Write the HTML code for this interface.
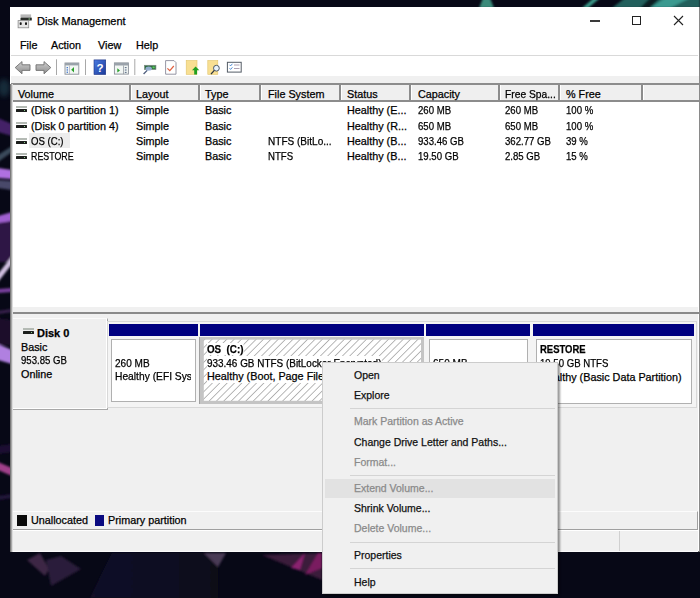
<!DOCTYPE html>
<html><head><meta charset="utf-8">
<style>
*{margin:0;padding:0;box-sizing:border-box}
html,body{width:700px;height:598px;overflow:hidden;background:#07081a}
body{position:relative;font-family:"Liberation Sans",sans-serif;font-size:10.8px;color:#000;-webkit-text-stroke:0.25px currentColor}
.cn{display:inline-block;transform:scaleX(0.89);transform-origin:0 0}
.a{position:absolute}
.t{position:absolute;white-space:nowrap;line-height:12px}
#bg{left:0;top:0}
#win{left:10px;top:7px;width:690px;height:545px;background:#fff;border-right:1px solid #8a8a8a;border-bottom:1px solid #6e6e6e}
.hl{position:absolute;height:1px}
.vl{position:absolute;width:1px}
.col{position:absolute;top:83px;height:19px;width:2px;background:#8c8c8c}
.col:after{content:"";position:absolute;left:2px;top:2px;width:1px;height:15px;background:#fff}
.ht{position:absolute;top:88px;white-space:nowrap;line-height:12px}
.row{position:absolute;white-space:nowrap;line-height:12px}
.drv{position:absolute;width:11px;height:3px;background:#1c1e1c;border-radius:0.5px}
.drv:before{content:"";position:absolute;left:0;top:-3px;width:11px;height:2px;background:#b4bab4}
.drv:after{content:"";position:absolute;right:2px;top:1px;width:1px;height:1px;background:#8fd08f}
.mi{position:absolute;left:354px;white-space:nowrap;line-height:12px;font-size:10.5px;color:#111}
.dis{color:#8a8a8a}
.sep{position:absolute;left:350px;width:205px;height:1px;background:#d4d4d4}
</style></head><body>
<svg id="bg" class="a" width="700" height="598" viewBox="0 0 700 598">
  <defs>
    <linearGradient id="gn" x1="0" y1="0" x2="1" y2="0"><stop offset="0" stop-color="#120e28"/><stop offset="0.6" stop-color="#0e0b22"/><stop offset="1" stop-color="#0a0a18"/></linearGradient>
    <filter id="bl" x="-20%" y="-20%" width="140%" height="140%"><feGaussianBlur stdDeviation="1.2"/></filter>
    <filter id="bl2" x="-20%" y="-20%" width="140%" height="140%"><feGaussianBlur stdDeviation="2.5"/></filter>
  </defs>
  <rect width="700" height="598" fill="#070816"/>
  <!-- top strip teal -->
  <g filter="url(#bl)">
  <path d="M483 -2 L490 -2 L494 8 L479 8Z" fill="#3a8a7a"/>
  <path d="M582 8 L594 -2 L600 -2 L588 8Z" fill="#3a9a8a"/>
  <path d="M612 8 L625 -2 L700 -2 L700 8Z" fill="#235e5c"/>
  <path d="M640 8 L650 -2 L660 -2 L650 8Z" fill="#0a1a20"/>
  <path d="M650 8 L665 -2 L690 -2 L670 8Z" fill="#3a9a90"/>
  </g>
  <!-- left purple stripes -->
  <ellipse cx="4" cy="88" rx="6" ry="9" fill="#1a3a4a" opacity="0.7" filter="url(#bl2)"/>
  <g filter="url(#bl)">
  <path d="M-2 118 L12 124 L12 136 L-2 132Z" fill="#4a2470" opacity="0.9"/>
  <path d="M-2 155 L12 146 L12 152 L-2 162Z" fill="#3a4a5a"/>
  <path d="M-2 168 L12 170 L12 179 L-2 178Z" fill="#b070e0"/>
  <path d="M-2 180 L12 181 L12 190 L-2 188Z" fill="#4a4a6a"/>
  <path d="M-2 216 L12 212 L12 221 L-2 225Z" fill="#a060d0"/>
  <path d="M-2 223 L12 221 L12 262 L-2 262Z" fill="#2e1545"/>
  <path d="M-2 274 L12 256 L12 264 L-2 282Z" fill="#d0c0e0"/>
  <path d="M-2 289 L12 288 L12 292 L-2 293Z" fill="#7a40a0"/>
  <path d="M-2 311 L12 309 L12 312 L-2 314Z" fill="#3a2050"/>
  <path d="M-2 318 L12 320 L12 346 L-2 344Z" fill="#1a0c2a"/>
  <path d="M-2 344 L12 350 L12 364 L-2 360Z" fill="#b080e0"/>
  <path d="M-2 446 L12 444 L12 452 L-2 454Z" fill="#1e1030"/>
  <path d="M-2 462 L12 468 L12 476 L-2 470Z" fill="#a0408a"/>
  <path d="M-2 496 L12 494 L12 498 L-2 500Z" fill="#22123a"/>
  </g>
  <!-- bottom shapes -->
  <g filter="url(#bl)">
  <path d="M27 560 L40 553 L49 569 L45 576Z" fill="#3e2844"/>
  <path d="M46 560 L61 556 L81 569 L51 586Z" fill="#2c1f3a"/>
  <path d="M112 553 L218 553 L218 598 L90 598Z" fill="url(#gn)"/>
  <path d="M204 553 L226 553 L218 567Z" fill="#4a3a55"/>
  <path d="M262 555 L322 553 L322 580Z" fill="#3a1a3a"/>
  <path d="M291 568 L305 553 L300 570Z" fill="#8a2070"/>
  <path d="M305 575 L318 553 L322 553 L322 568Z" fill="#7a1a60"/>
  </g>
</svg>

<div id="win" class="a"></div>

<!-- title bar -->
<svg class="a" style="left:14px;top:12px" width="24" height="20" viewBox="0 0 24 20">
  <rect x="6.5" y="2.4" width="10.6" height="2.8" fill="#b8b8b8"/>
  <rect x="6.5" y="5.4" width="11.3" height="3.2" rx="0.6" fill="#2a2e2a"/>
  <rect x="14.6" y="6.4" width="1.2" height="1.2" fill="#9ad09a"/>
  <rect x="4.1" y="8.6" width="10.6" height="7.2" fill="#e6e6e6" stroke="#8a8a8a" stroke-width="0.8"/>
  <rect x="5.7" y="10.3" width="2" height="2.8" rx="0.8" fill="#1a1a1a"/>
  <rect x="11" y="10.3" width="2" height="2.8" rx="0.8" fill="#1a1a1a"/>
</svg>
<div class="t" style="left:37px;top:15px;font-size:11px">Disk Management</div>
<div class="a" style="left:590px;top:20px;width:10px;height:2px;background:#3a3a3a"></div>
<div class="a" style="left:632px;top:16px;width:9px;height:9px;border:1px solid #222"></div>
<svg class="a" style="left:673px;top:15px" width="11" height="11" viewBox="0 0 11 11"><path d="M1 1L10 10M10 1L1 10" stroke="#222" stroke-width="1.1"/></svg>

<!-- menu bar -->
<div class="t" style="left:20px;top:39px">File</div>
<div class="t" style="left:51px;top:39px">Action</div>
<div class="t" style="left:98px;top:39px">View</div>
<div class="t" style="left:136px;top:39px">Help</div>
<div class="a" style="left:11px;top:55px;width:687px;height:1px;background:#d9d9d9"></div>

<!-- toolbar -->
<svg class="a" style="left:11px;top:56px" width="240" height="20" viewBox="11 56 240 20">
  <defs>
    <linearGradient id="ga" x1="0" y1="0" x2="0" y2="1"><stop offset="0" stop-color="#d0d0d0"/><stop offset="1" stop-color="#8c8c8c"/></linearGradient>
    <linearGradient id="gb" x1="0" y1="0" x2="1" y2="1"><stop offset="0" stop-color="#4a7ae0"/><stop offset="1" stop-color="#1a3a9a"/></linearGradient>
  </defs>
  <path d="M15.2 67.6 L22 61.6 L22 64.8 L30 64.8 L30 70.4 L22 70.4 L22 73.8Z" fill="url(#ga)" stroke="#707070" stroke-width="0.9" stroke-linejoin="round"/>
  <path d="M50.8 67.6 L44 61.6 L44 64.8 L36 64.8 L36 70.4 L44 70.4 L44 73.8Z" fill="url(#ga)" stroke="#707070" stroke-width="0.9" stroke-linejoin="round"/>
  <rect x="56" y="59.3" width="1" height="15.7" fill="#a8a8a8"/>
  <rect x="65" y="63" width="13.8" height="11.2" fill="#f2f6f4" stroke="#8a9098" stroke-width="0.9"/>
  <rect x="65" y="63" width="13.8" height="2.4" fill="#9aa2aa"/>
  <rect x="66.6" y="67" width="1.4" height="1.3" fill="#4a7ad0"/><rect x="66.6" y="69.3" width="1.4" height="1.3" fill="#4a7ad0"/><rect x="66.6" y="71.6" width="1.4" height="1.3" fill="#4a7ad0"/>
  <rect x="69.2" y="65.6" width="0.7" height="8.4" fill="#aab"/>
  <path d="M74 67 L71.2 69.8 L74 72.6Z" fill="#2aa02a"/>
  <rect x="85" y="59.3" width="1" height="15.7" fill="#a8a8a8"/>
  <rect x="94" y="59.9" width="11.7" height="14.6" fill="url(#gb)" stroke="#1a2f80" stroke-width="0.6"/>
  <text x="99.9" y="71.6" font-family="Liberation Sans" font-size="11.5" font-weight="bold" fill="#fff" text-anchor="middle">?</text>
  <rect x="114.4" y="62.9" width="14" height="11.2" fill="#f2f6f4" stroke="#8a9098" stroke-width="0.9"/>
  <rect x="114.4" y="62.9" width="14" height="2.6" fill="#9aa2aa"/>
  <path d="M117.3 68.2 L120 70.4 L117.3 72.6Z" fill="#2aa02a"/>
  <rect x="123.3" y="65.5" width="0.7" height="8.6" fill="#8a9098"/>
  <rect x="124.8" y="67" width="1.8" height="1.2" fill="#6a7a90"/><rect x="124.8" y="69.4" width="1.8" height="1.2" fill="#6a7a90"/><rect x="124.8" y="71.8" width="1.8" height="1.2" fill="#6a7a90"/>
  <rect x="134.3" y="59" width="1" height="16" fill="#a8a8a8"/>
  <rect x="144.5" y="65.3" width="11.4" height="4.2" fill="#2e6a40" stroke="#7a8a80" stroke-width="0.7"/>
  <rect x="152.5" y="66.5" width="2.2" height="1.8" fill="#5ad05a"/>
  <ellipse cx="148.7" cy="68.6" rx="3.2" ry="2.2" fill="#9ab4dc" opacity="0.9"/>
  <path d="M143.6 74 L147.2 70.4" stroke="#4a5a7a" stroke-width="1.3"/>
  <path d="M165.6 60.6 L174 60.6 L176 62.6 L176 74.2 L165.6 74.2Z" fill="#fff" stroke="#8a8a9a" stroke-width="0.9"/>
  <path d="M167.4 68.3 L169.8 70.7 L173.8 66" stroke="#e06040" stroke-width="1.2" fill="none"/>
  <rect x="186.2" y="60.5" width="10.8" height="13.9" fill="#f8df92" stroke="#e2c46a" stroke-width="0.6"/>
  <path d="M195.6 66.4 L199.3 70.2 L197 70.2 L197 74.4 L194.2 74.4 L194.2 70.2 L192 70.2Z" fill="#20a020"/>
  <rect x="207.8" y="60.5" width="10" height="13.9" fill="#f8df92" stroke="#e2c46a" stroke-width="0.6"/>
  <circle cx="216.4" cy="68.2" r="2.9" fill="#e8f2fa" stroke="#3a4a5a" stroke-width="0.9"/>
  <path d="M214.3 70.3 L211 74.2" stroke="#2a3440" stroke-width="1.3"/>
  <rect x="227.4" y="62.3" width="13.8" height="9.8" fill="#fff" stroke="#545c66" stroke-width="1"/>
  <path d="M229.6 64.8 L230.6 65.9 L232.4 63.8" stroke="#3a80d0" stroke-width="0.9" fill="none"/>
  <path d="M229.6 68.3 L230.6 69.4 L232.4 67.3" stroke="#3a80d0" stroke-width="0.9" fill="none"/>
  <rect x="234" y="64.6" width="5.5" height="0.8" fill="#9a8aa0"/><rect x="234" y="68.1" width="5.5" height="0.8" fill="#9a8aa0"/>
</svg>

<!-- gray band -->
<div class="a" style="left:11px;top:76px;width:688px;height:7px;background:#f0f0f0"></div>
<!-- header -->
<div class="a" style="left:11px;top:83px;width:688px;height:19px;background:#efefef;border-top:2px solid #8c8c8c;border-bottom:2px solid #8c8c8c"></div>
<div class="col" style="left:129px"></div>
<div class="col" style="left:198px"></div>
<div class="col" style="left:259px"></div>
<div class="col" style="left:339px"></div>
<div class="col" style="left:409px"></div>
<div class="col" style="left:498px"></div>
<div class="col" style="left:558px"></div>
<div class="col" style="left:641px"></div>
<div class="ht" style="left:18px">Volume</div>
<div class="ht" style="left:136px">Layout</div>
<div class="ht" style="left:205px">Type</div>
<div class="ht" style="left:268px">File System</div>
<div class="ht" style="left:347px">Status</div>
<div class="ht" style="left:418px">Capacity</div>
<div class="ht cn" style="left:505px;transform:scaleX(0.95)">Free Spa...</div>
<div class="ht" style="left:566px">% Free</div>

<!-- rows -->
<div class="a" style="left:29px;top:133px;width:41px;height:15px;background:#ececec"></div>
<div class="drv" style="left:16px;top:109px"></div>
<div class="drv" style="left:16px;top:125px"></div>
<div class="drv" style="left:16px;top:141px"></div>
<div class="drv" style="left:16px;top:156px"></div>

<div class="row" style="top:104px;left:31px">(Disk 0 partition 1)</div>
<div class="row" style="top:104px;left:136px">Simple</div>
<div class="row" style="top:104px;left:205px">Basic</div>
<div class="row" style="top:104px;left:347px">Healthy (E...</div>
<div class="row cn" style="top:104px;left:418px">260 MB</div>
<div class="row cn" style="top:104px;left:505px">260 MB</div>
<div class="row cn" style="top:104px;left:566px">100 %</div>

<div class="row" style="top:120px;left:31px">(Disk 0 partition 4)</div>
<div class="row" style="top:120px;left:136px">Simple</div>
<div class="row" style="top:120px;left:205px">Basic</div>
<div class="row" style="top:120px;left:347px">Healthy (R...</div>
<div class="row cn" style="top:120px;left:418px">650 MB</div>
<div class="row cn" style="top:120px;left:505px">650 MB</div>
<div class="row cn" style="top:120px;left:566px">100 %</div>

<div class="row cn" style="top:135px;left:31px">OS (C:)</div>
<div class="row" style="top:135px;left:136px">Simple</div>
<div class="row" style="top:135px;left:205px">Basic</div>
<div class="row cn" style="top:135px;left:268px;transform:scaleX(0.93)">NTFS (BitLo...</div>
<div class="row" style="top:135px;left:347px">Healthy (B...</div>
<div class="row cn" style="top:135px;left:418px">933.46 GB</div>
<div class="row cn" style="top:135px;left:505px">362.77 GB</div>
<div class="row cn" style="top:135px;left:566px">39 %</div>

<div class="row cn" style="top:150px;left:31px;transform:scaleX(0.82)">RESTORE</div>
<div class="row" style="top:150px;left:136px">Simple</div>
<div class="row" style="top:150px;left:205px">Basic</div>
<div class="row cn" style="top:150px;left:268px">NTFS</div>
<div class="row" style="top:150px;left:347px">Healthy (B...</div>
<div class="row cn" style="top:150px;left:418px">19.50 GB</div>
<div class="row cn" style="top:150px;left:505px">2.85 GB</div>
<div class="row cn" style="top:150px;left:566px">15 %</div>

<!-- splitter & lower pane -->
<div class="a" style="left:11px;top:307px;width:687px;height:223px;background:#f0f0f0"></div>
<div class="a" style="left:11px;top:312px;width:688px;height:2px;background:#8a8a8a"></div>

<!-- disk label -->
<div class="a" style="left:12px;top:318px;width:96px;height:92px;background:#efefef;border-right:1px solid #a8a8a8;border-bottom:1px solid #a8a8a8;border-top:1px solid #fafafa;box-shadow:inset -1px -1px 0 #fff"></div>
<div class="drv" style="left:23px;top:331px"></div>
<div class="t" style="left:37px;top:327px;font-weight:bold;font-size:11px">Disk 0</div>
<div class="t" style="left:21px;top:341px">Basic</div>
<div class="t cn" style="left:21px;top:354px">953.85 GB</div>
<div class="t" style="left:21px;top:368px">Online</div>

<!-- partitions container -->
<div class="a" style="left:107px;top:321px;width:590px;height:87px;background:#f4f4f4;border:1px solid #d8d8d8"></div>
<!-- p1 -->
<div class="a" style="left:109px;top:324px;width:89px;height:12px;background:#000080"></div>
<div class="a" style="left:111px;top:339px;width:85px;height:63px;background:#fff;border:1px solid #b0b0b0"></div>
<div class="t cn" style="left:115px;top:357px;transform:scaleX(0.93)">260 MB</div>
<div class="t" style="left:115px;top:370px;width:76px;overflow:hidden"><span class="cn" style="transform:scaleX(0.95)">Healthy (EFI System</span></div>
<!-- p2 OS -->
<div class="a" style="left:200px;top:324px;width:224px;height:12px;background:#000080"></div>
<svg class="a" style="left:199px;top:337px" width="225" height="67" viewBox="0 0 225 67">
  <defs><pattern id="h" width="5.2" height="5.2" patternUnits="userSpaceOnUse" patternTransform="rotate(45)"><rect width="5.2" height="5.2" fill="#fff"/><rect x="0" y="0" width="0.8" height="5.2" fill="#a8a8a8"/></pattern></defs>
  <rect x="0" y="0" width="225" height="67" fill="#c4c4c4"/>
  <rect x="0" y="0" width="1" height="67" fill="#a0a0a0"/>
  <rect x="4.8" y="2.7" width="217.2" height="61.1" fill="url(#h)"/>
</svg>
<div class="t cn" style="left:207px;top:343px;font-weight:bold;font-size:11px;background:#fff">OS&nbsp; (C:)</div>
<div class="t cn" style="left:207px;top:356px;transform:scaleX(0.92);background:#fff;line-height:14px;padding-bottom:1px">933.46 GB NTFS (BitLocker Encrypted)</div>
<div class="t" style="left:207px;top:370px;background:#fff;line-height:13px">Healthy (Boot, Page File, Crash Dump, Primary Partition)</div>
<!-- p3 -->
<div class="a" style="left:426px;top:324px;width:104px;height:12px;background:#000080"></div>
<div class="a" style="left:429px;top:339px;width:99px;height:63px;background:#fff;border:1px solid #b0b0b0"></div>
<div class="t cn" style="left:433px;top:357px;transform:scaleX(0.93)">650 MB</div>
<!-- p4 -->
<div class="a" style="left:533px;top:324px;width:161px;height:12px;background:#000080"></div>
<div class="a" style="left:536px;top:339px;width:156px;height:65px;background:#fff;border:1px solid #b0b0b0"></div>
<div class="t cn" style="left:540px;top:343px;font-weight:bold;font-size:11px;transform:scaleX(0.86)">RESTORE</div>
<div class="t cn" style="left:540px;top:357px">19.50 GB NTFS</div>
<div class="t" style="left:540px;top:371px">Healthy (Basic Data Partition)</div>

<!-- legend -->
<div class="a" style="left:11px;top:511px;width:687px;height:19px;background:#f0f0f0;border-top:1px solid #fcfcfc;border-right:1px solid #a0a0a0;border-bottom:1px solid #a0a0a0"></div>
<div class="a" style="left:17px;top:515px;width:10px;height:11px;background:#0a0a0a"></div>
<div class="t" style="left:31px;top:514px">Unallocated</div>
<div class="a" style="left:95px;top:515px;width:9px;height:11px;background:#0a0a80"></div>
<div class="t" style="left:108px;top:514px">Primary partition</div>
<!-- status bar -->
<div class="a" style="left:11px;top:530px;width:687px;height:22px;background:#f0f0f0;border-top:1px solid #fff;border-bottom:1px solid #fafafa"></div>
<div class="a" style="left:619px;top:531px;width:1px;height:20px;background:#d0d0d0"></div>

<div class="a" style="left:10px;top:84px;width:3px;height:468px;background:linear-gradient(90deg,#7a7a7a 0,#7a7a7a 1px,#a8a8a8 1px,#a8a8a8 2px,#dcdcdc 2px)"></div>
<!-- context menu -->
<div class="a" style="left:322px;top:362px;width:236px;height:232px;background:#f0f0f0;border:1px solid #cccccc;box-shadow:2px 2px 2px rgba(0,0,0,0.4)"></div>
<div class="a" style="left:325px;top:479px;width:230px;height:19px;background:#e2e2e2"></div>
<div class="mi" style="top:369px">Open</div>
<div class="mi" style="top:389px">Explore</div>
<div class="sep" style="top:408px"></div>
<div class="mi dis" style="top:415px">Mark Partition as Active</div>
<div class="mi" style="top:436px">Change Drive Letter and Paths...</div>
<div class="mi dis" style="top:456px">Format...</div>
<div class="sep" style="top:475px"></div>
<div class="mi dis" style="top:482px">Extend Volume...</div>
<div class="mi" style="top:502px">Shrink Volume...</div>
<div class="mi dis" style="top:522px">Delete Volume...</div>
<div class="sep" style="top:542px"></div>
<div class="mi" style="top:549px">Properties</div>
<div class="sep" style="top:568px"></div>
<div class="mi" style="top:576px">Help</div>
</body></html>
